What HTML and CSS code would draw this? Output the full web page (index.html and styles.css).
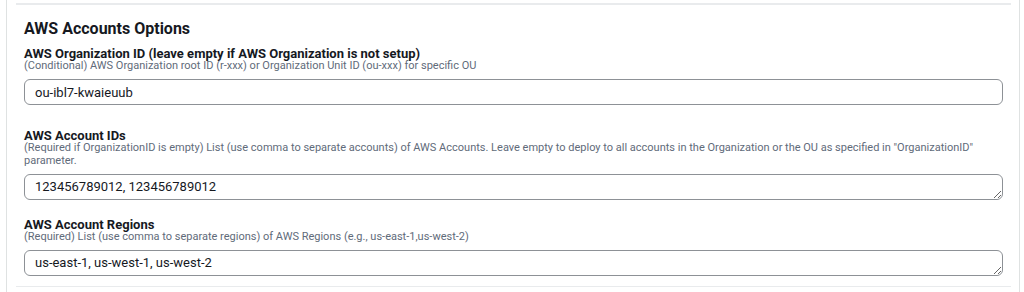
FILE: index.html
```html
<!DOCTYPE html>
<html lang="en">

<head>
    <meta charset="UTF-8">
    <title>AWS Accounts Options</title>
    <link rel="stylesheet" href="styles.css">
</head>

<body>
    <div class="frame">
        <div class="section">
            <h2>AWS Accounts Options</h2>

            <div class="field field-first">
                <label for="orgId">AWS Organization ID (leave empty if AWS Organization is not setup)</label>
                <p class="hint">(Conditional) AWS Organization root ID (r-xxx) or Organization Unit ID (ou-xxx) for specific OU</p>
                <input type="text" id="orgId" value="ou-ibl7-kwaieuub">
            </div>

            <div class="field">
                <label for="accountIds">AWS Account IDs</label>
                <p class="hint">(Required if OrganizationID is empty) List (use comma to separate accounts) of AWS Accounts. Leave empty to deploy to all accounts in the Organization or the OU as specified in "OrganizationID" parameter.</p>
                <textarea id="accountIds" rows="1">123456789012, 123456789012</textarea>
            </div>

            <div class="field">
                <label for="regions">AWS Account Regions</label>
                <p class="hint">(Required) List (use comma to separate regions) of AWS Regions (e.g., us-east-1,us-west-2)</p>
                <textarea id="regions" rows="1">us-east-1, us-west-1, us-west-2</textarea>
            </div>
        </div>
    </div>
</body>

</html>
```

FILE: styles.css
```css
body {
    margin: 0;
    font-family: Roboto, Arial, sans-serif;
    color: #16191f;
    background: #fff;
}

.frame {
    margin-left: 6px;
    width: 1014px;
    height: 292px;
    box-sizing: border-box;
    border-left: 1px solid #dfe2e2;
    border-right: 1px solid #dfe2e2;
    padding: 3px 8px 0 9px;
}

.section {
    border-top: 2px solid #e9ebed;
    border-bottom: 1px solid #e9ebed;
    padding: 0 8px 10px 8px;
}

h2 {
    margin: 0;
    padding-top: 14px;
    font-size: 16px;
    line-height: 20px;
    font-weight: 700;
}

.field {
    margin-top: 18px;
}

.field-first {
    margin-top: 8px;
    padding-bottom: 6px;
}

label {
    display: block;
    margin-bottom: -2px;
    font-size: 13px;
    font-weight: 700;
    line-height: 14px;
}

.hint {
    margin: 0 0 7px 0;
    font-size: 11px;
    line-height: 13px;
    color: #5f6b7a;
}

input,
textarea {
    display: block;
    width: 100%;
    height: 26px;
    box-sizing: border-box;
    padding: 4px 10px;
    border: 1px solid #8d9196;
    border-radius: 6px;
    font-family: Roboto, Arial, sans-serif;
    font-size: 13px;
    line-height: 16px;
    color: #16191f;
    background: #fff;
}

textarea {
    resize: vertical;
    overflow: hidden;
}
```
